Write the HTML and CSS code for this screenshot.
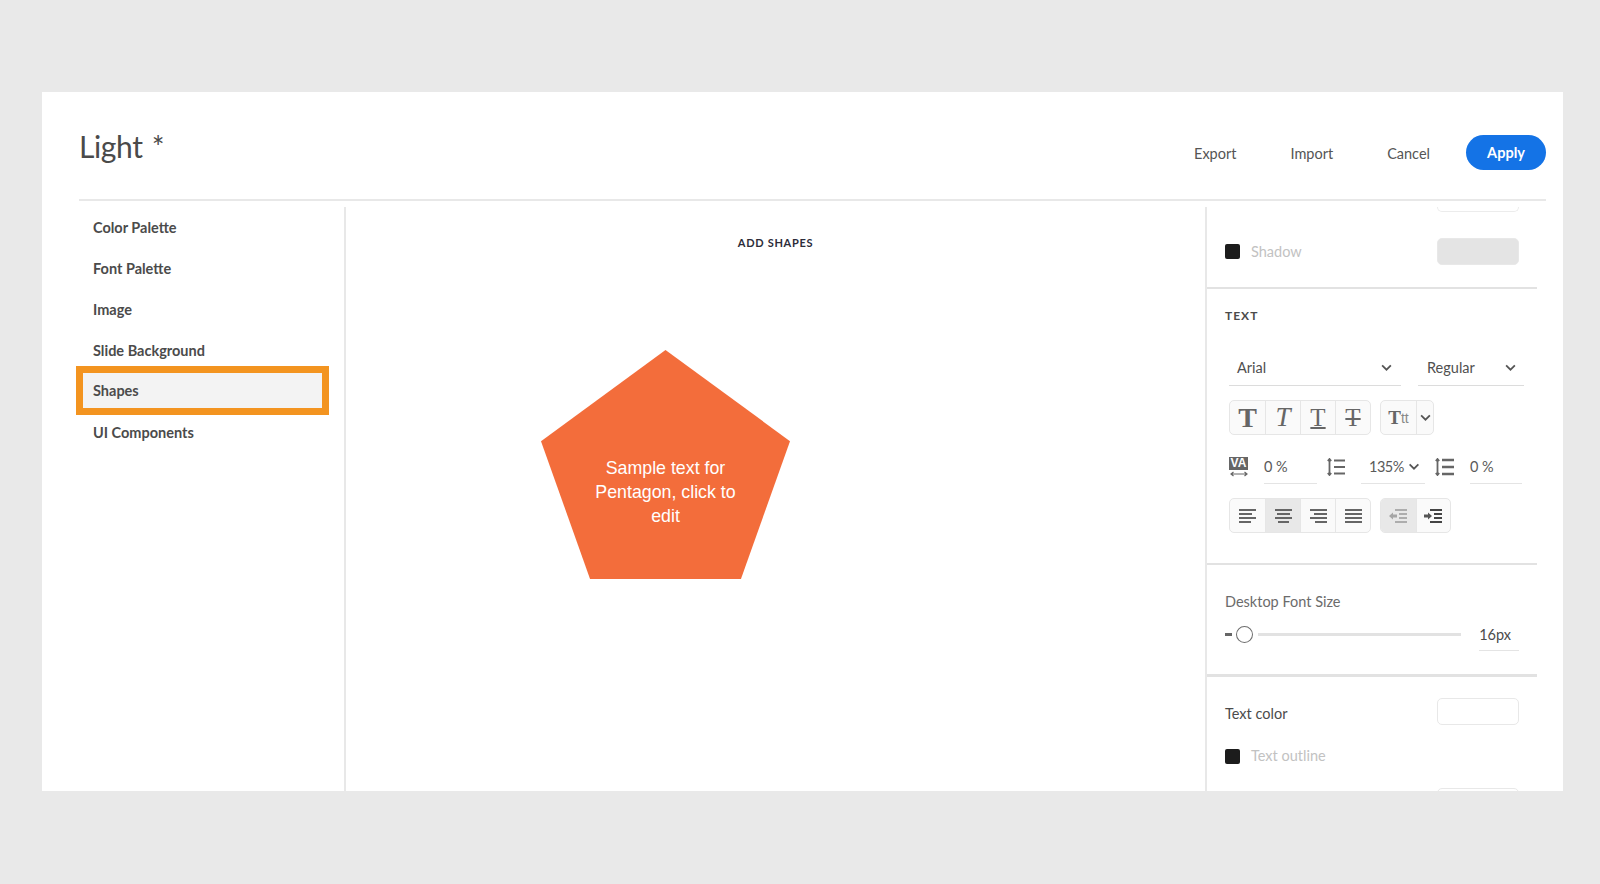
FILE: index.html
```html
<!DOCTYPE html>
<html lang="en">
<head>
    <meta charset="UTF-8">
    <meta name="viewport" content="width=device-width, initial-scale=1.0">
    <title>Theme editor</title>
    <link rel="stylesheet" href="styles.css">
</head>
<body>
    <div class="card">
        <header class="top-bar">
            <h1 class="theme-title">Light <span class="star">*</span></h1>
            <div class="actions">
                <a class="action export">Export</a>
                <a class="action import">Import</a>
                <a class="action cancel">Cancel</a>
                <button class="apply">Apply</button>
            </div>
        </header>

        <div class="editor">
            <nav class="side-nav">
                <div class="nav-item">Color Palette</div>
                <div class="nav-item">Font Palette</div>
                <div class="nav-item">Image</div>
                <div class="nav-item">Slide Background</div>
                <div class="nav-item selected">Shapes</div>
                <div class="nav-item">UI Components</div>
            </nav>

            <main class="canvas">
                <h2 class="canvas-title">ADD SHAPES</h2>
                <div class="pentagon">
                    <p>Sample text for Pentagon, click to edit</p>
                </div>
            </main>

            <aside class="props">
                <section class="props-section shadow-section">
                    <div class="stub-box"></div>
                    <div class="prop-row">
                        <span class="check-label"><i class="swatch"></i><span class="muted">Shadow</span></span>
                        <div class="color-box filled"></div>
                    </div>
                </section>

                <section class="props-section text-section">
                    <h3 class="section-title">TEXT</h3>
                    <div class="select-row">
                        <div class="select font-select">
                            <span>Arial</span>
                            <svg class="chevron" viewBox="0 0 12 8"><path d="M1 1.5l5 5 5-5"/></svg>
                        </div>
                        <div class="select weight-select">
                            <span>Regular</span>
                            <svg class="chevron" viewBox="0 0 12 8"><path d="M1 1.5l5 5 5-5"/></svg>
                        </div>
                    </div>

                    <div class="tool-row">
                        <div class="btn-group">
                            <div class="tool glyph bold">T</div>
                            <div class="tool glyph italic">T</div>
                            <div class="tool glyph underline">T</div>
                            <div class="tool glyph strike">T</div>
                        </div>
                        <div class="btn-group">
                            <div class="tool case-tool"><span class="case-big">T</span><span class="case-small">tt</span></div>
                            <div class="tool narrow">
                                <svg class="chevron" viewBox="0 0 12 8"><path d="M1 1.5l5 5 5-5"/></svg>
                            </div>
                        </div>
                    </div>

                    <div class="spacing-row">
                        <div class="va-icon"><span class="va-text">VA</span>
                            <svg class="icon" viewBox="0 0 18 6" width="18" height="6"><path d="M1 3h16M3.500 1L1 3l2.500 2M14.500 1L17 3l-2.500 2"/></svg>
                        </div>
                        <div class="num-field char-field">0 %</div>
                        <svg class="icon line-icon" viewBox="0 0 19 18" width="19" height="18"><path d="M2.500 1v16M.8 3L2.500 1l1.700 2M.8 15l1.700 2 1.700-2M7 2.500h11M7 9h11M7 15.500h11"/></svg>
                        <div class="num-field line-field">135%
                            <svg class="chevron" viewBox="0 0 12 8"><path d="M1 1.5l5 5 5-5"/></svg>
                        </div>
                        <svg class="icon para-icon" viewBox="0 0 19 18" width="19" height="18"><path d="M2.500 1v16M.8 3L2.500 1l1.700 2M.8 15l1.700 2 1.700-2"/><path class="thick" d="M7 2h12M7 9h12M7 16h12"/></svg>
                        <div class="num-field para-field">0 %</div>
                    </div>

                    <div class="tool-row">
                        <div class="btn-group">
                            <div class="tool">
                                <svg class="icon" viewBox="0 0 17 16" width="17" height="16"><path d="M0 2h17M0 6h13M0 10h17M0 14h12"/></svg>
                            </div>
                            <div class="tool active">
                                <svg class="icon" viewBox="0 0 17 16" width="17" height="16"><path d="M0 2h17M2 6h13M0 10h17M3 14h11"/></svg>
                            </div>
                            <div class="tool">
                                <svg class="icon" viewBox="0 0 17 16" width="17" height="16"><path d="M0 2h17M4 6h13M0 10h17M5 14h12"/></svg>
                            </div>
                            <div class="tool">
                                <svg class="icon" viewBox="0 0 17 16" width="17" height="16"><path d="M0 2h17M0 6h17M0 10h17M0 14h17"/></svg>
                            </div>
                        </div>
                        <div class="btn-group">
                            <div class="tool wide active dim">
                                <svg class="icon" viewBox="0 0 18 16" width="18" height="16"><path d="M6 2h12M10 6h8M10 10h8M6 14h12"/><path class="solid" d="M0 8l4-3.500v2h4v3H4v2z"/></svg>
                            </div>
                            <div class="tool wide">
                                <svg class="icon dark" viewBox="0 0 18 16" width="18" height="16"><path d="M6 2h12M10 6h8M10 10h8M6 14h12"/><path class="solid" d="M8 8L4 4.500v2H0v3h4v2z"/></svg>
                            </div>
                        </div>
                    </div>
                </section>

                <section class="props-section size-section">
                    <div class="field-label">Desktop Font Size</div>
                    <div class="slider-row">
                        <span class="minus"></span>
                        <span class="thumb"></span>
                        <span class="track"></span>
                        <span class="size-value">16px</span>
                    </div>
                </section>

                <section class="color-section">
                    <div class="prop-row">
                        <span class="text-color-label">Text color</span>
                        <div class="color-box"></div>
                    </div>
                    <div class="outline-row">
                        <span class="check-label"><i class="swatch"></i><span class="muted">Text outline</span></span>
                    </div>
                    <div class="cut-box"></div>
                </section>
            </aside>
        </div>
    </div>
</body>
</html>
```

FILE: styles.css
```css
* {
    box-sizing: border-box;
}

html, body {
    height: 100%;
}

body {
    margin: 0;
    padding: 92px 37px 93px 42px;
    background-color: #e9e9e9;
    font-family: Lato, "Open Sans", sans-serif;
    color: #4b4b4b;
    overflow: hidden;
}

.card {
    height: 699px;
    display: flex;
    flex-direction: column;
    background-color: #fff;
    overflow: hidden;
}

.top-bar {
    flex: none;
    height: 109px;
    margin: 0 17px 0 37px;
    border-bottom: 2px solid #e8e8e8;
    display: flex;
    justify-content: space-between;
    align-items: flex-start;
}

.theme-title {
    margin: 31px 0 0;
    font-size: 30px;
    line-height: 46px;
    font-weight: 400;
    letter-spacing: -0.4px;
    color: #4a4a4a;
}

.star {
    margin-left: 2px;
    font-size: 30px;
}

.actions {
    display: flex;
    align-items: flex-start;
    margin-top: 43px;
}

.action {
    font-size: 14.5px;
    line-height: 37px;
    color: #555;
}

.export {
    margin-right: 54px;
}

.import {
    margin-right: 54px;
}

.cancel {
    margin-right: 36px;
}

.apply {
    width: 80px;
    height: 35px;
    border: none;
    border-radius: 18px;
    background-color: #1473e6;
    color: #fff;
    font-family: inherit;
    font-size: 14.5px;
    font-weight: 700;
}

.editor {
    flex: 1;
    min-height: 0;
    display: flex;
    padding: 6px 26px 0 37px;
}

.side-nav {
    flex: none;
    width: 267px;
    border-right: 2px solid #e8e8e8;
}

.nav-item {
    height: 41px;
    padding-left: 14px;
    font-size: 14.5px;
    font-weight: 700;
    line-height: 41px;
    color: #4b4b4b;
}

.nav-item.selected {
    height: 35px;
    margin: 2px 22px 4px 4px;
    padding-left: 10px;
    line-height: 35px;
    background-color: #f3f3f3;
    outline: 7px solid #f39420;
}

.canvas {
    flex: 1;
    min-width: 0;
    padding-top: 28px;
}

.canvas-title {
    margin: 0;
    font-size: 11px;
    line-height: 16px;
    font-weight: 700;
    letter-spacing: 0.7px;
    text-align: center;
    color: #2c2c3a;
}

.pentagon {
    width: 249px;
    height: 229px;
    margin: 99px 0 0 195px;
    padding: 106px 40px 0;
    background-color: #f36d3b;
    clip-path: polygon(50% 0, 100% 39.8%, 80.3% 100%, 19.7% 100%, 0 39.8%);
}

.pentagon p {
    margin: 0;
    font-family: "Liberation Sans", Arial, sans-serif;
    font-size: 17.8px;
    line-height: 24px;
    text-align: center;
    color: #fff;
}

.props {
    flex: none;
    width: 332px;
    border-left: 2px solid #e8e8e8;
    overflow: hidden;
}

.props-section {
    padding: 0 18px;
    border-bottom: 2px solid #e2e2e2;
}

.shadow-section {
    height: 82px;
}

.stub-box {
    width: 82px;
    height: 5px;
    margin-left: auto;
    border: 1px solid #ececec;
    border-top: none;
    border-radius: 0 0 5px 5px;
}

.prop-row {
    display: flex;
    justify-content: space-between;
    align-items: center;
}

.shadow-section .prop-row {
    margin-top: 26px;
}

.color-box {
    width: 82px;
    height: 27px;
    border: 1px solid #e8e8e8;
    border-radius: 5px;
}

.color-box.filled {
    background-color: #e4e4e4;
}

.check-label {
    display: flex;
    align-items: center;
    font-size: 14.5px;
    line-height: 15px;
}

.swatch {
    width: 15px;
    height: 15px;
    margin-right: 11px;
    border-radius: 2px;
    background-color: #1c1c1c;
}

.muted {
    color: #c2c2c2;
    margin-top: -1px;
}

.text-section {
    padding: 21px 0 30px 18px;
}

.section-title {
    margin: 0;
    font-size: 12px;
    line-height: 12px;
    font-weight: 700;
    letter-spacing: 1px;
    color: #4b4b4b;
}

.select-row {
    display: flex;
    gap: 17px;
    margin: 28px 0 0 4px;
}

.select {
    height: 36px;
    display: flex;
    justify-content: space-between;
    align-items: center;
    border-bottom: 1px solid #dcdcdc;
    font-size: 14.5px;
    color: #505050;
    padding-bottom: 1px;
}

.font-select {
    width: 172px;
    padding-left: 8px;
    padding-right: 9px;
}

.weight-select {
    width: 106px;
    padding-left: 9px;
    padding-right: 8px;
}

.chevron {
    flex: none;
    width: 11px;
    height: 7px;
    fill: none;
    stroke: #555;
    stroke-width: 2;
}

.tool-row {
    display: flex;
    gap: 9px;
    margin: 14px 0 0 4px;
}

.btn-group {
    height: 35px;
    display: flex;
    border: 1px solid #e6e6e6;
    border-radius: 5px;
    background-color: #fafafa;
    overflow: hidden;
}

.tool {
    width: 35px;
    display: flex;
    justify-content: center;
    align-items: center;
    border-left: 1px solid #e6e6e6;
}

.tool:first-child {
    border-left: none;
}

.tool.narrow {
    width: 17px;
}

.tool.wide {
    width: 34.5px;
}

.tool.active {
    background-color: #e8e8e8;
}

.tool.dim .icon {
    opacity: 0.45;
}

.glyph {
    font-family: "Liberation Serif", serif;
    font-size: 25px;
    color: #666;
}

.glyph.bold {
    font-weight: 700;
    font-size: 28px;
}

.glyph.italic {
    font-style: italic;
    font-size: 27px;
}

.glyph.underline {
    text-decoration: underline;
    text-decoration-thickness: 1.5px;
    text-underline-offset: 1px;
}

.glyph.strike {
    text-decoration: line-through;
    text-decoration-thickness: 1.5px;
}

.case-tool {
    font-family: "Liberation Serif", serif;
    color: #666;
}

.case-big {
    font-size: 19px;
    font-weight: 700;
}

.case-small {
    font-family: "Liberation Sans", sans-serif;
    font-size: 14px;
    color: #888;
}

.icon {
    fill: none;
    stroke: #666;
    stroke-width: 1.8;
}

.icon.dark {
    stroke: #444;
}

.icon .solid {
    stroke: none;
    fill: #555;
}

.icon .thick {
    stroke-width: 2.5;
}

.spacing-row {
    height: 35px;
    display: flex;
    align-items: center;
    margin: 14px 0 0 4px;
    font-size: 14.5px;
    color: #5a5a5a;
}

.va-icon {
    width: 19px;
    display: flex;
    flex-direction: column;
    align-items: center;
}

.va-text {
    width: 19px;
    height: 13px;
    background-color: #666;
    color: #fff;
    font-family: "Liberation Sans", sans-serif;
    font-size: 12px;
    font-weight: 700;
    line-height: 13px;
    text-align: center;
}

.va-icon .icon {
    margin-top: 1px;
    stroke-width: 1.2;
}

.num-field {
    height: 35px;
    display: flex;
    align-items: center;
    border-bottom: 1px solid #e4e4e4;
}

.char-field {
    width: 53px;
    margin-left: 16px;
}

.line-icon {
    margin-left: 10px;
}

.line-field {
    width: 64px;
    margin-left: 15px;
    padding-left: 8px;
    padding-right: 5px;
    justify-content: space-between;
    letter-spacing: -0.5px;
}

.line-field .chevron {
    width: 12px;
}

.para-icon {
    margin-left: 10px;
}

.para-field {
    width: 52px;
    margin-left: 16px;
}

.size-section {
    padding-top: 28px;
    padding-bottom: 24px;
    height: 112px;
    border-bottom-width: 3px;
}

.field-label {
    font-size: 14.5px;
    line-height: 18px;
    color: #6b6b6b;
}

.slider-row {
    height: 34px;
    margin-top: 6px;
    display: flex;
    align-items: center;
}

.minus {
    width: 7px;
    height: 3px;
    background-color: #666;
}

.thumb {
    width: 17px;
    height: 17px;
    margin-left: 4px;
    border: 1.8px solid #6e6e6e;
    border-radius: 50%;
    background-color: #fff;
}

.track {
    width: 204px;
    height: 3px;
    margin-left: 5px;
    background-color: #e2e2e2;
}

.size-value {
    width: 40px;
    height: 34px;
    margin-left: 18px;
    border-bottom: 1px solid #e4e4e4;
    font-size: 14.5px;
    line-height: 35px;
    color: #4b4b4b;
}

.color-section {
    padding: 21px 18px 0;
}

.text-color-label {
    font-size: 14.5px;
    padding-top: 4px;
}

.outline-row {
    height: 20px;
    margin-top: 21px;
    display: flex;
    align-items: center;
}

.cut-box {
    width: 82px;
    height: 10px;
    margin: 22px 0 0 auto;
    border: 1px solid #e8e8e8;
    border-radius: 5px;
}
```
